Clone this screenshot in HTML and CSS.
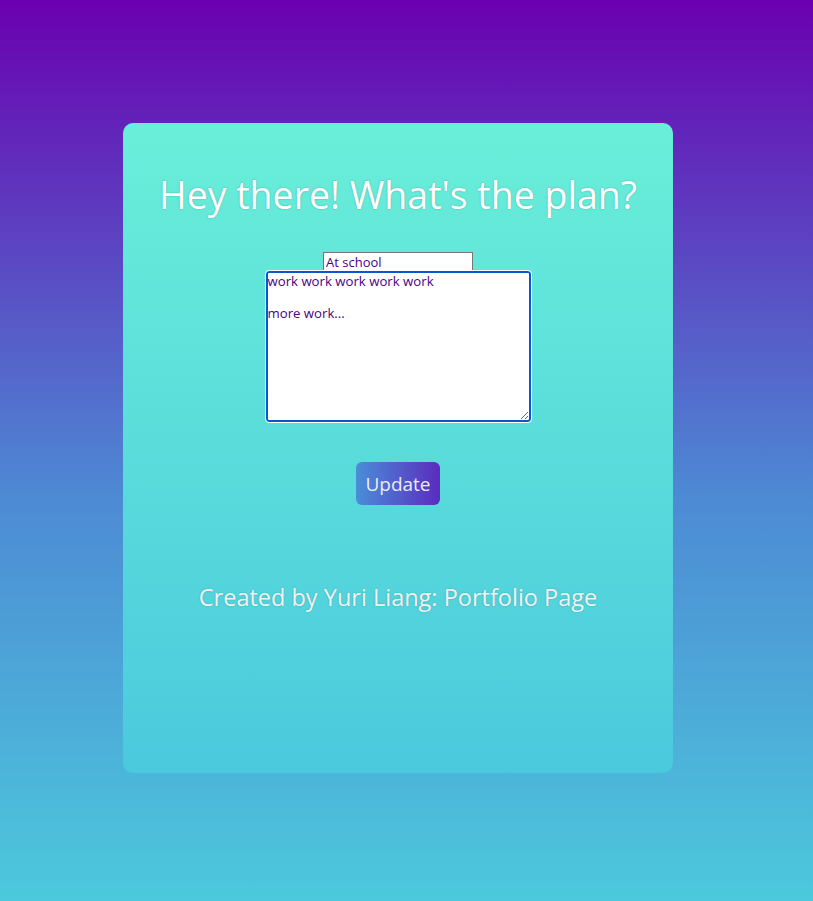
FILE: index.html
```html
<!DOCTYPE html>
<html>
<head>
<meta charset="utf-8">
<link rel="stylesheet" href="styles.css">
</head>
<body>
<div class="page">
  <div class="card">
    <h1 class="title">Hey there! What's the plan?</h1>
    <div class="form">
      <input class="where" type="text" value="At school">
      <textarea class="notes">work work work work work

more work...</textarea>
    </div>
    <button class="update">Update</button>
    <p class="credit">Created by Yuri Liang: Portfolio Page</p>
  </div>
</div>
</body>
</html>
```
FILE: styles.css
```css
html, body {
  margin: 0;
  height: 100%;
}
body {
  background: linear-gradient(to bottom, #6a00b0 0%, #4d8ad4 55%, #4cc9dc 100%);
  font-family: "Open Sans", "DejaVu Sans", sans-serif;
}
.page {
  width: 796px;
  padding-top: 123px;
  display: flex;
  justify-content: center;
}
.card {
  width: 550px;
  height: 650px;
  border-radius: 10px;
  background: linear-gradient(to bottom, #69efd9, #4bc9dd);
  display: flex;
  flex-direction: column;
  align-items: center;
}
.title {
  margin: 49px 0 0;
  font-size: 37.5px;
  font-weight: 400;
  color: #fff;
  text-shadow: 0 0 2px rgba(0,0,0,0.25);
  line-height: 46px;
}
.form {
  margin-top: 34px;
  display: flex;
  flex-direction: column;
  align-items: center;
}
.where {
  width: 150px;
  height: 19px;
  box-sizing: border-box;
  border: 1px solid #767676;
  padding: 0 2px;
  font-family: inherit;
  font-size: 13px;
  font-weight: 500;
  color: #4b0082;
  margin: 0;
}
.notes {
  width: 265px;
  height: 151px;
  box-sizing: border-box;
  margin: 0;
  border: 2px solid #0b57d0;
  border-radius: 3px;
  outline: 1px solid #fff;
  padding: 0;
  font-family: inherit;
  font-size: 13.2px;
  font-weight: 500;
  line-height: 16px;
  color: #4b0082;
  resize: both;
}
.update {
  margin-top: 40px;
  width: 84px;
  height: 43px;
  border: none;
  border-radius: 6px;
  background: linear-gradient(to right, #4a8ed8, #5b2cbf);
  color: #ececf4;
  font-family: inherit;
  font-size: 19px;
  padding: 0;
}
.credit {
  margin: 76px 0 0;
  font-size: 23.5px;
  color: #f2f2f2;
  text-shadow: 0 0 2px rgba(0,0,0,0.2);
}
```
